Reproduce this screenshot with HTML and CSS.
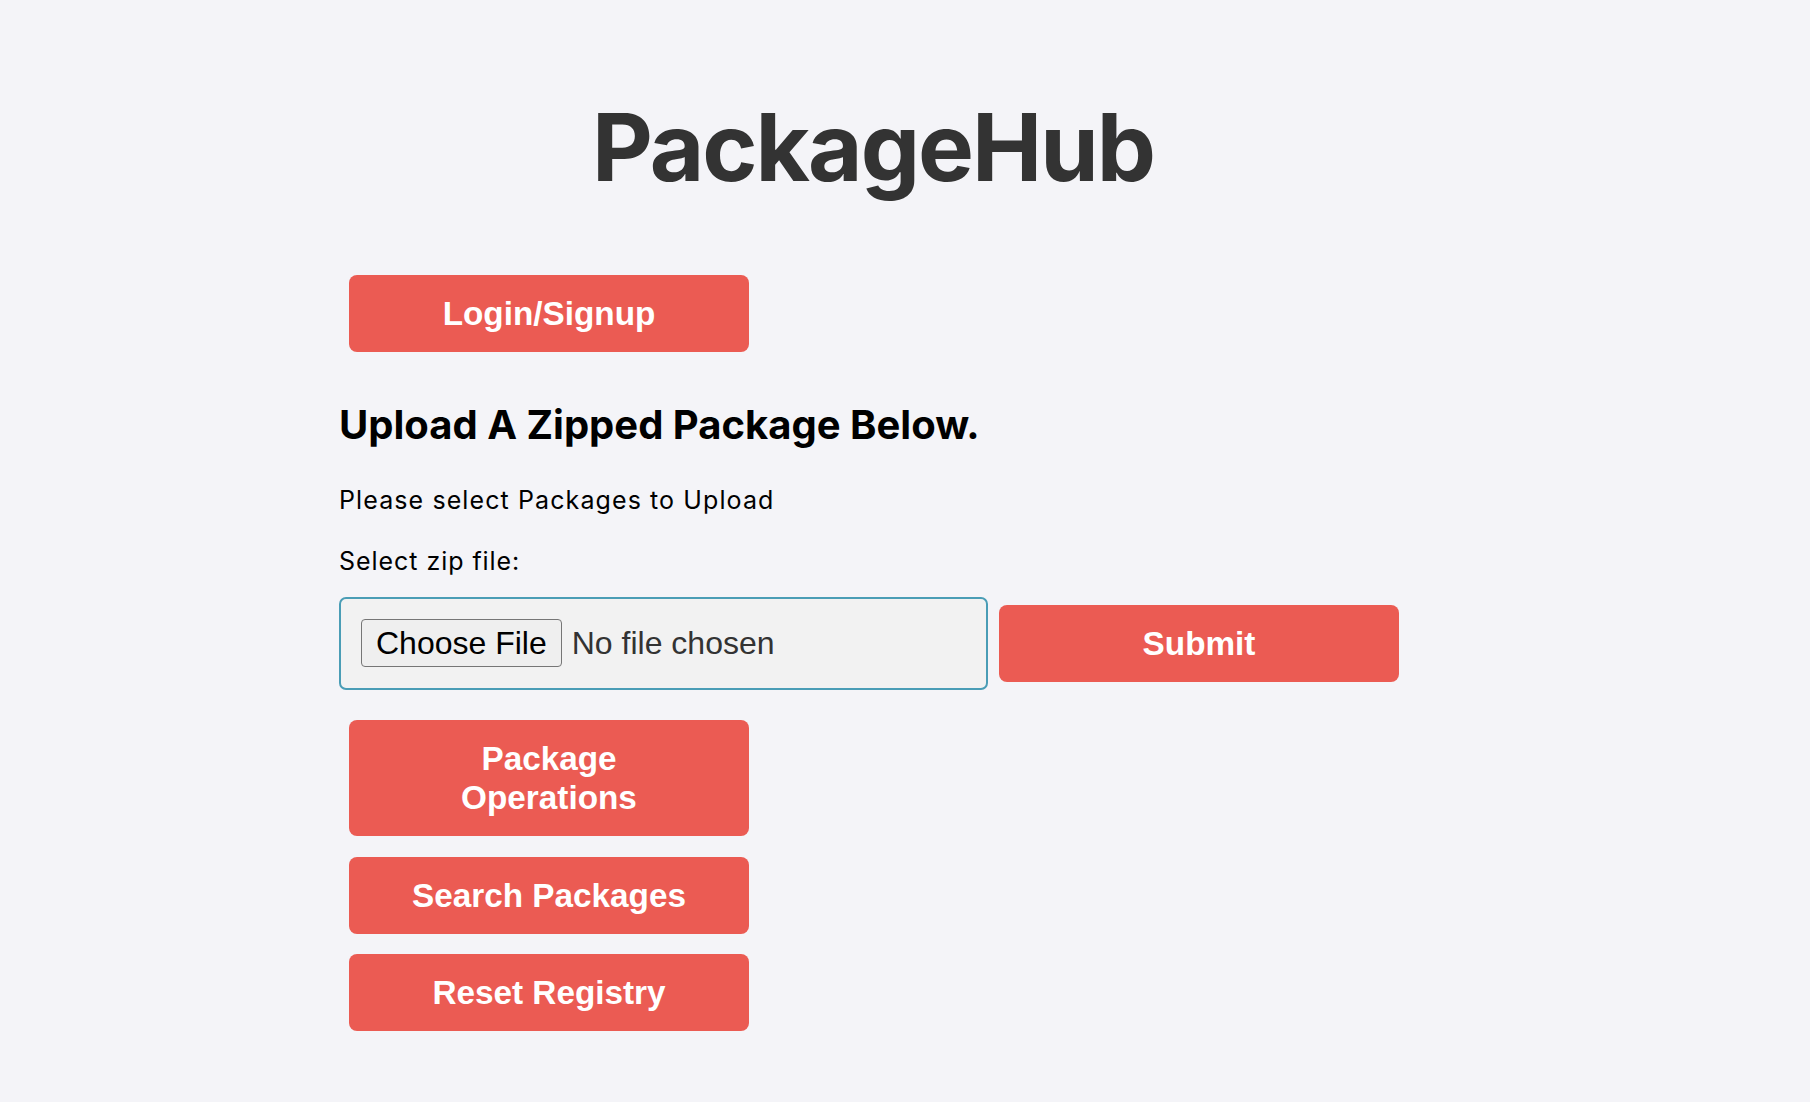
FILE: index.html
```html
<!DOCTYPE html>
<html lang="en">
<head>
<meta charset="utf-8">
<title>PackageHub</title>
<link rel="stylesheet" href="styles.css">
</head>
<body>
<main class="page">
  <h1 class="title">PackageHub</h1>
  <button class="btn btn-login" type="button">Login/Signup</button>
  <h2 class="section-title">Upload A Zipped Package Below.</h2>
  <p class="hint">Please select Packages to Upload</p>
  <label class="field-label" for="zip">Select zip file:</label>
  <form class="upload-row">
    <input class="file-input" id="zip" type="file" accept=".zip">
    <button class="btn btn-submit" type="button">Submit</button>
  </form>
  <div class="actions">
    <button class="btn btn-stack" type="button">Package Operations</button>
    <button class="btn btn-stack" type="button">Search Packages</button>
    <button class="btn btn-stack" type="button">Reset Registry</button>
  </div>
</main>
</body>
</html>
```
FILE: styles.css
```css
html, body {
  margin: 0;
  padding: 0;
}
body {
  background: #f4f4f8;
  font-family: Inter, "Noto Sans", sans-serif;
  color: #000;
}
.page {
  width: 1068px;
  margin-left: 339px;
  padding-top: 100px;
  display: flex;
  flex-direction: column;
  align-items: flex-start;
}
.title {
  align-self: stretch;
  text-align: center;
  margin: 0 0 81px;
  font-size: 94px;
  line-height: 94px;
  font-weight: 700;
  letter-spacing: -2px;
  color: #333;
}
.btn {
  box-sizing: border-box;
  width: 400px;
  border: none;
  border-radius: 8px;
  background: #eb5b53;
  color: #fff;
  font-family: "Liberation Sans", Arial, sans-serif;
  font-weight: 700;
  font-size: 33.3px;
  line-height: 39px;
  padding: 19px 50px;
  text-align: center;
  cursor: pointer;
}
.btn-login {
  margin-left: 10px;
}
.section-title {
  margin: 49px 0 0;
  font-size: 40px;
  line-height: 48px;
  font-weight: 700;
}
.hint {
  margin: 37px 0 0;
  font-size: 25px;
  line-height: 29px;
  letter-spacing: 1.1px;
}
.field-label {
  margin-top: 32px;
  font-size: 25px;
  line-height: 29px;
  letter-spacing: 0.95px;
}
.upload-row {
  margin-top: 21px;
  display: flex;
  align-items: center;
  gap: 11px;
}
.file-input {
  box-sizing: border-box;
  width: 649px;
  height: 93px;
  padding: 20px;
  border: 2px solid #4a9db6;
  border-radius: 7px;
  background: #f2f2f2;
  color: #333;
  font-family: "Liberation Sans", Arial, sans-serif;
  font-size: 32px;
}
.file-input::file-selector-button {
  box-sizing: border-box;
  height: 48px;
  padding: 0 14px;
  margin-right: 10px;
  border: 1.5px solid #767676;
  border-radius: 4px;
  background: #efefef;
  color: #000;
  font-family: "Liberation Sans", Arial, sans-serif;
  font-size: 32px;
}
.actions {
  margin-top: 30px;
  margin-left: 10px;
  display: flex;
  flex-direction: column;
  gap: 20.5px;
}
```
